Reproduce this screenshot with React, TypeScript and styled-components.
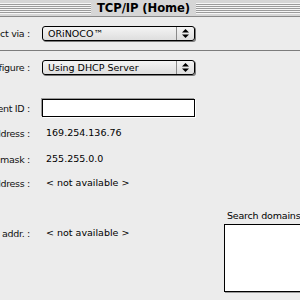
import styled, { createGlobalStyle } from "styled-components";

const GlobalStyle = createGlobalStyle`
  html, body {
    margin: 0;
    padding: 0;
    background: #ececec;
    overflow: hidden;
  }
  body {
    font-family: "DejaVu Sans", Verdana, sans-serif;
    font-size: 9.5px;
    color: #000;
  }
`;

const Window = styled.div`
  width: 487px;
  height: 300px;
  margin-left: -100px;
  background: #ececec;
  display: flex;
  flex-direction: column;
`;

const TitleBar = styled.div`
  height: 16px;
  display: flex;
  align-items: center;
  background: #d6d6d6;
  border-bottom: 1px solid #8a8a8a;
`;

const Stripes = styled.div`
  flex: 1;
  height: 11px;
  background: repeating-linear-gradient(
    to bottom,
    #f6f6f6 0px,
    #f6f6f6 1px,
    #9c9c9c 1px,
    #9c9c9c 2px
  );
`;

const Title = styled.div`
  padding: 0 6px;
  font-family: "DejaVu Sans", sans-serif;
  font-weight: bold;
  font-size: 11.6px;
  letter-spacing: -0.1px;
  line-height: 16px;
`;

const Row = styled.div<{ $top: number }>`
  display: grid;
  grid-template-columns: 130px 153px;
  column-gap: 12px;
  align-items: center;
  margin-top: ${(p) => p.$top}px;
`;

const Label = styled.div`
  text-align: right;
  white-space: nowrap;
  letter-spacing: -0.3px;
  color: #111;
`;

const Value = styled.div`
  padding-left: 4px;
  white-space: nowrap;
  line-height: 14px;
`;

const Popup = styled.div`
  height: 13px;
  display: flex;
  border: 1px solid #000;
  border-radius: 3px;
  background: linear-gradient(#f4f4f4, #dedede);
  box-shadow: 1px 1px 0 #7a7a7a;
`;

const PopupText = styled.div`
  flex: 1;
  padding-left: 5px;
  line-height: 13px;
  white-space: nowrap;
`;

const PopupArrows = styled.div`
  width: 17px;
  border-left: 1px solid #8a8a8a;
  display: flex;
  align-items: center;
  justify-content: center;
`;

const Divider = styled.div`
  height: 1px;
  margin-top: 9px;
  background: #7c7c7c;
`;

const TextField = styled.div`
  height: 16px;
  border: 1px solid #000;
  background: #fff;
  box-shadow: -1px -1px 0 #9a9a9a, 1px 1px 0 #ffffff;
`;

const Bottom = styled.div`
  display: flex;
  margin-top: 20px;
`;

const LeftColumn = styled.div`
  width: 324px;
`;

const SearchBlock = styled.div`
  display: flex;
  flex-direction: column;
`;

const SearchLabel = styled.div`
  padding-left: 3px;
  line-height: 12px;
  white-space: nowrap;
  letter-spacing: -0.2px;
`;

const SearchBox = styled.div`
  margin-top: 2px;
  width: 120px;
  height: 66px;
  background: #fff;
  border: 1px solid #000;
  box-shadow: 1px 1px 0 #9a9a9a;
`;

function Arrows() {
  return (
    <svg width="7" height="9" viewBox="0 0 7 9">
      <polygon points="3.5,0 7,3.5 0,3.5" fill="#000" />
      <polygon points="0,5.5 7,5.5 3.5,9" fill="#000" />
    </svg>
  );
}

export default function App() {
  return (
    <>
      <GlobalStyle />
      <Window>
        <TitleBar>
          <Stripes />
          <Title>TCP/IP (Home)</Title>
          <Stripes />
        </TitleBar>

        <Row $top={9}>
          <Label>Connect via :</Label>
          <Popup>
            <PopupText>ORiNOCO™</PopupText>
            <PopupArrows>
              <Arrows />
            </PopupArrows>
          </Popup>
        </Row>

        <Divider />

        <Row $top={9}>
          <Label>Configure :</Label>
          <Popup>
            <PopupText>Using DHCP Server</PopupText>
            <PopupArrows>
              <Arrows />
            </PopupArrows>
          </Popup>
        </Row>

        <Row $top={24}>
          <Label>DHCP Client ID :</Label>
          <TextField />
        </Row>

        <Row $top={9}>
          <Label>IP Address :</Label>
          <Value>169.254.136.76</Value>
        </Row>

        <Row $top={12}>
          <Label>Subnet mask :</Label>
          <Value>255.255.0.0</Value>
        </Row>

        <Row $top={10}>
          <Label>Router address :</Label>
          <Value>&lt; not available &gt;</Value>
        </Row>

        <Bottom>
          <LeftColumn>
            <Row $top={16}>
              <Label>Name server addr. :</Label>
              <Value>&lt; not available &gt;</Value>
            </Row>
          </LeftColumn>
          <SearchBlock>
            <SearchLabel>Search domains :</SearchLabel>
            <SearchBox />
          </SearchBlock>
        </Bottom>
      </Window>
    </>
  );
}
